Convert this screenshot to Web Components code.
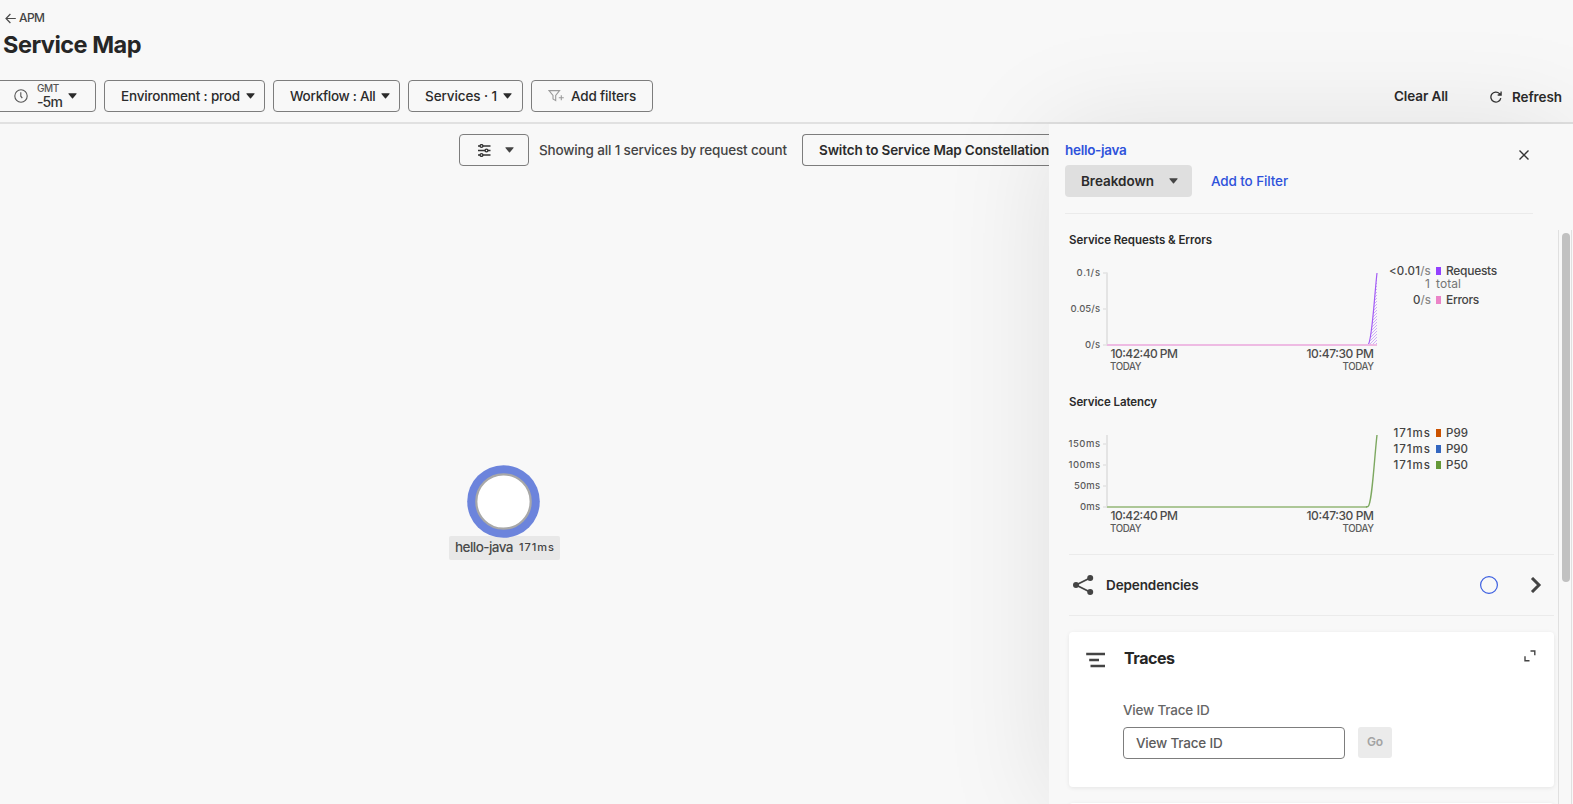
<!DOCTYPE html>
<html lang="en">
<head>
<meta charset="utf-8">
<title>Service Map</title>
<style>
  html, body { margin: 0; height: 100%; overflow: hidden; background: #f8f8f8; }
  body { font-family: Inter, Roboto, "Liberation Sans", sans-serif; font-size: 13.5px; color: #2b2b2b; }
</style>
</head>
<body>
<service-map-page></service-map-page>
<script>
const define = (name, html, extra) => {
  const tpl = document.createElement('template');
  tpl.innerHTML = html;
  customElements.define(name, class extends HTMLElement {
    connectedCallback() {
      if (this.shadowRoot) return;
      this.attachShadow({ mode: 'open' }).append(tpl.content.cloneNode(true));
      if (extra) extra(this, this.shadowRoot);
    }
  });
};

/* Text line that tracks its letters to a set width. Attributes: w, s (size), b (weight), c (colour). */
customElements.define('ui-text', class extends HTMLElement {
  connectedCallback() {
    if (this.shadowRoot) return;
    const r = this.attachShadow({ mode: 'open' });
    r.innerHTML = '<style>:host{display:block;flex:none;white-space:pre;line-height:20px}span{display:inline-block}</style><span><slot></slot></span>';
    const a = n => this.getAttribute(n);
    if (a('s')) this.style.fontSize = a('s') + 'px';
    if (a('b')) this.style.fontWeight = a('b');
    if (a('c')) this.style.color = a('c');
    if (a('w')) {
      const w = r.querySelector('span').getBoundingClientRect().width;
      this.style.letterSpacing = ((+a('w') - w) / this.textContent.length) + 'px';
      this.style.width = a('w') + 'px';
    }
  }
});

define('ui-caret', `
<style>:host{display:block;flex:none;width:9px;height:6px}svg{display:block}</style>
<svg width="9" height="6"><path d="M.8.3h7.4q.7 0 .3.6L5 5.3q-.5.5-1 0L.5.9Q.1.3.8.3z" fill="currentColor"/></svg>`);

define('ui-button', `
<style>
:host{display:flex;flex:none;align-items:center;box-sizing:border-box;height:32px;border:1px solid #7d7d7d;border-radius:4px}
:host([solid]){border:0;background:#dfdfdf}
</style><slot></slot>`);

define('page-header', `
<style>
:host{display:flex;flex-direction:column;flex:none;box-sizing:border-box;height:124px;border-bottom:2px solid #e1e1e1}
.back{display:flex;align-items:center;height:20px;margin:8px 0 0 5px;gap:3px}
.title{margin:2px 0 0 3px;height:30px}
.title ui-text{line-height:30px}
.row{display:flex;align-items:center;margin:20px 0 0 -8px;gap:8px}
.gmt{margin:-2px 6px 0 9px;width:25px}
.gmt ui-text{line-height:13px}
.sp{flex:1}
</style>
<div class="back"><svg width="11" height="11" viewBox="0 0 11 11" fill="none" stroke="#4a4a4a" stroke-width="1.2"><path d="M10.8 5.5H1M5.4 1 1 5.5 5.4 10"/></svg><ui-text s="12" w="25.5" c="#444" b="450">APM</ui-text></div>
<div class="title"><ui-text s="23.5" w="138" b="700" c="#262626">Service Map</ui-text></div>
<div class="row">
  <ui-button style="width:104px;padding-left:21px">
    <svg width="14" height="14" viewBox="0 0 14 14" fill="none" stroke="#555" stroke-width="1.1"><circle cx="7" cy="7" r="6.2"/><path d="M6.8 3.3v3.9l1.5 2"/></svg>
    <div class="gmt"><ui-text s="10" w="22" c="#555" b="450">GMT</ui-text><ui-text s="14" w="25" c="#333" b="450">-5m</ui-text></div>
    <ui-caret></ui-caret>
  </ui-button>
  <ui-button style="width:161px;padding-left:16px;gap:6px"><ui-text w="119" b="500">Environment : prod</ui-text><ui-caret></ui-caret></ui-button>
  <ui-button style="width:127px;padding-left:16px;gap:5px"><ui-text w="85.5" b="500">Workflow : All</ui-text><ui-caret></ui-caret></ui-button>
  <ui-button style="width:115px;padding-left:16px;gap:6px"><ui-text w="72" b="500">Services · 1</ui-text><ui-caret></ui-caret></ui-button>
  <ui-button style="width:122px;padding-left:16px;gap:6px"><svg width="17" height="14" viewBox="0 0 17 14" fill="none" stroke="#9b9b9b" stroke-width="1.1"><path d="M1 1.6h10.6L7.7 6.4v5.2L5 10V6.4zM10.8 8.7h5M13.3 6.2v5"/></svg><ui-text w="65" b="500">Add filters</ui-text></ui-button>
  <div class="sp"></div>
  <ui-text w="54" b="600" style="margin-right:34px">Clear All</ui-text>
  <svg width="12" height="12" viewBox="0 0 12 12" fill="none" stroke="#333" stroke-width="1.3" style="margin-top:2px"><path d="M10.8 7.1A5 5 0 1 1 9.5 2.6L11 4M11.1.6V4H7.700"/></svg>
  <ui-text w="50" b="600" style="margin:2px 11px 0 2px">Refresh</ui-text>
</div>`);

define('service-node', `
<style>
:host{display:flex;flex-direction:column;align-items:center;width:111px}
svg{display:block;position:relative}
.l{display:flex;align-items:center;box-sizing:border-box;width:111px;height:24px;margin-top:-3px;padding:0 0 2px 6px;gap:6px;background:#e8e8e8;border-radius:2px}
</style>
<svg width="75" height="75" viewBox="0 0 75 75"><circle cx="36.500" cy="37.500" r="36.300" fill="#6c84dc"/><circle cx="36.500" cy="37.500" r="27.200" fill="#fff" stroke="#a8a8a8" stroke-width="2.200"/></svg>
<div class="l"><ui-text w="58" c="#4a4a4a" b="450">hello-java</ui-text><ui-text s="11" w="36" b="500" c="#444">171ms</ui-text></div>`);

define('map-canvas', `
<style>
:host{display:block;flex:none;width:1049px;position:relative;overflow:hidden}
.bar{display:flex;align-items:center;padding:10px 0 0 459px}
service-node{position:absolute;left:449px;top:340px}
</style>
<div class="bar">
  <ui-button style="width:70px;padding-left:18px;gap:14px"><svg width="13" height="13" viewBox="0 0 13 13" fill="none" stroke="#333" stroke-width="1.400"><path d="M0 2h2M5 2h7.500M0 6.500h7M10 6.500h2.500M0 11h2M5 11h7.500"/><circle cx="3.500" cy="2" r="1.400"/><circle cx="8.500" cy="6.500" r="1.400"/><circle cx="3.500" cy="11" r="1.400"/></svg><ui-caret style="color:#444"></ui-caret></ui-button>
  <ui-text w="248" c="#444" b="450" style="margin:0 15px 0 10px">Showing all 1 services by request count</ui-text>
  <ui-button style="width:247px;padding-left:16px;border-right:0;border-radius:4px 0 0 4px"><ui-text w="230" b="600">Switch to Service Map Constellation</ui-text></ui-button>
</div>
<service-node></service-node>`);

/* Line chart with a flat run and a closing spike. Kind: requests | latency. */
define('svc-chart', `
<style>
:host{display:block;height:162px}
.t{height:20px;padding-left:4px}
.row{display:flex}
svg{display:block;flex:none}
text{font-family:Inter,Roboto,sans-serif;fill:#5c5c5c}
</style>
<div class="t"><slot name="title"></slot></div>
<div class="row"><svg class="plot" width="318" height="142"></svg><slot></slot></div>`,
(host, root) => {
  const req = host.getAttribute('kind') === 'requests';
  const ticks = req ? [['0.1/s', 23, 23.5], ['0.05/s', 59, 29.5], ['0/s', 95, 15]]
                    : [['150ms', 32, 31.5], ['100ms', 53, 31.5], ['50ms', 74, 26], ['0ms', 95, 20]];
  let s = '';
  for (const [t, y, w] of ticks)
    s += `<path d="M38 ${y}h4" stroke="#e8e8e8" stroke-width="2"/><text x="${35 - w}" y="${y + 3}" font-size="9.500" font-weight="500" textLength="${w}">${t}</text>`;
  s += `<path d="M42 ${req ? 22.5 : 23}V96" stroke="#e4e4e4" stroke-width="2"/>`;
  const curve = 'M303 95C307 92 309 50 312 23';
  if (req) s += `<defs><pattern id="h" width="3" height="3" patternUnits="userSpaceOnUse"><path d="M-1 1 1-1M0 3 3 0M2 4 4 2" stroke="#c49af8" stroke-width=".8"/></pattern></defs>
    <path d="${curve}V95z" fill="url(#h)"/><path d="${curve}" fill="none" stroke="#a35cf5" stroke-width="1.200"/><path d="M42 95h270" stroke="#eebbe3" stroke-width="2"/>`;
  else s += `<path d="M42 95H302" stroke="#adc797" stroke-width="2"/><path d="M301 95L303 94.500C307 92 309 50 312 23" fill="none" stroke="#7da860" stroke-width="1.400"/>`;
  s += `<g font-weight="450"><text x="45.500" y="108" font-size="12" textLength="67.500" style="fill:#4c4c4c">10:42:40 PM</text><text x="241.500" y="108" font-size="12" textLength="67.500" style="fill:#4c4c4c">10:47:30 PM</text>
    <text x="45" y="120" font-size="9.700" textLength="31.500">TODAY</text><text x="277.500" y="120" font-size="9.700" textLength="31.500">TODAY</text></g>`;
  root.querySelector('.plot').innerHTML = s;
});

define('legend-row', `
<style>
:host{display:flex;align-items:center;height:16px}
.v{width:48px;display:flex;justify-content:flex-end}
i{width:5px;height:8px;margin:0 5px;background:var(--c);flex:none}
:host([sub]) i{display:none}
:host([sub]) .v{width:47px;margin-right:6px}
:host([sub]){height:10px;margin-bottom:3px}
</style><div class="v"><slot name="v"></slot></div><i></i><slot></slot>`);

define('dependencies-row', `
<style>
:host{display:flex;align-items:center;box-sizing:border-box;height:62px;margin-left:4px;width:485px;border:solid #ebebeb;border-width:1px 0;padding:0 12px 0 4px}
svg{flex:none}
</style>
<svg width="21" height="20" viewBox="0 0 21 20"><path d="M3 10 17 3M3 10l14 7" stroke="#444" stroke-width="1.900"/><g fill="#444"><circle cx="3" cy="10" r="3"/><circle cx="17.200" cy="3" r="3"/><circle cx="17.200" cy="17" r="3"/></g></svg>
<ui-text w="92.500" b="600" style="margin:0 auto 0 12px">Dependencies</ui-text>
<svg width="18" height="18"><circle cx="9" cy="9" r="8.400" fill="none" stroke="#3c5fe0" stroke-width="1.200"/></svg>
<svg width="12" height="16" viewBox="0 0 12 16" style="margin-left:32px"><path d="M2 1 9 8 2 15" fill="none" stroke="#444" stroke-width="3"/></svg>`);

define('traces-card', `
<style>
:host{display:block;box-sizing:border-box;width:485px;height:155px;margin:16px 0 0 4px;background:#fff;border-radius:4px;box-shadow:0 1px 4px rgba(0,0,0,.08)}
.h{display:flex;align-items:center;height:20px;padding:16px 18px 0 17px}
.f{padding:32px 0 0 54px}
.r{display:flex;align-items:center;margin-top:7px;gap:13px}
.go{height:31px;width:34px;background:#ebebeb;border-radius:3px;display:flex;align-items:center;justify-content:center;margin-top:-1px}
</style>
<div class="h"><svg width="20" height="16" viewBox="0 0 20 16" fill="none" stroke="#444" stroke-width="2.700" style="margin-top:3px"><path d="M.2 2H19M3.200 8H13M4.500 14H19"/></svg>
<ui-text s="16" w="50.500" b="700" c="#262626" style="margin:0 auto 0 18px">Traces</ui-text>
<svg width="12" height="12" viewBox="0 0 12 12" fill="none" stroke="#444" stroke-width="1.400" style="margin-top:-5px"><path d="M6.500 1h4.300v4.300M1 6.200v4.600h4.500"/></svg></div>
<div class="f"><ui-text w="86.500" c="#666" b="450">View Trace ID</ui-text>
<div class="r"><ui-button style="width:222px;padding-left:12px"><ui-text w="86.500" c="#5c5c5c" b="450">View Trace ID</ui-text></ui-button><div class="go"><ui-text s="12" w="16" b="600" c="#a3a3a3" style="margin-top:-1px">Go</ui-text></div></div></div>`);

define('detail-panel', `
<style>
:host{display:block;position:relative;flex:1;box-sizing:border-box;background:#f8f8f8;box-shadow:0 4px 104px rgba(0,0,0,.1);padding-left:16px}
.top{display:flex;justify-content:space-between;width:468px;height:89px;border-bottom:1px solid #ebebeb}
.a{padding-top:16px}
.b{display:flex;align-items:center;gap:19px;margin-top:5px}
.x{margin:26px 4px 0 0}
.body{display:flex;margin-top:16px;height:574px;overflow:hidden}
.c{width:493px;flex:none}
.bar{width:12px;border:solid #e0e0e0;border-width:0 1px;flex:none}
.thumb{width:8px;height:349px;margin:3px 0 0 3px;border-radius:4px;background:#c1c1c1}
.lg{padding-top:13px}
.next{margin:16px 0 0 4px;width:485px;height:40px;background:#fff;border-radius:4px;box-shadow:0 1px 4px rgba(0,0,0,.08)}
</style>
<div class="top">
  <div class="a"><ui-text w="61.500" b="600" c="#2f52db">hello-java</ui-text>
  <div class="b"><ui-button solid style="width:127px;padding-left:16px;gap:15px"><ui-text w="73" b="600">Breakdown</ui-text><ui-caret style="color:#444"></ui-caret></ui-button><ui-text w="77" b="450" c="#2f52db">Add to Filter</ui-text></div></div>
  <svg class="x" width="10" height="10" viewBox="0 0 10 10" stroke="#333" stroke-width="1.400"><path d="M.5.5l9 9M9.500.5l-9 9"/></svg>
</div>
<div class="body"><div class="c">
  <svc-chart kind="requests"><ui-text slot="title" s="11.5" w="143" b="600">Service Requests &amp; Errors</ui-text>
    <div class="lg">
      <legend-row style="--c:#9341ff"><ui-text slot="v" s="11.5" w="42" b="500" c="#444">&lt;0.01<span style="color:#888">/s</span></ui-text><ui-text s="12" w="51" b="500" c="#444">Requests</ui-text></legend-row>
      <legend-row sub><ui-text slot="v" s="12" c="#757575">1</ui-text><ui-text s="12" w="25" c="#757575">total</ui-text></legend-row>
      <legend-row style="--c:#eb84c8"><ui-text slot="v" s="11.5" w="18" b="500" c="#444">0<span style="color:#888">/s</span></ui-text><ui-text s="12" w="33" b="500" c="#444">Errors</ui-text></legend-row>
    </div>
  </svc-chart>
  <svc-chart kind="latency"><ui-text slot="title" s="11.5" w="88" b="600">Service Latency</ui-text>
    <div class="lg">
      <legend-row style="--c:#cb5200"><ui-text slot="v" s="11.5" w="37.500" b="500" c="#444">171ms</ui-text><ui-text s="11.5" w="22" b="500" c="#444">P99</ui-text></legend-row>
      <legend-row style="--c:#3366c0"><ui-text slot="v" s="11.5" w="37.500" b="500" c="#444">171ms</ui-text><ui-text s="11.5" w="22" b="500" c="#444">P90</ui-text></legend-row>
      <legend-row style="--c:#659938"><ui-text slot="v" s="11.5" w="37.500" b="500" c="#444">171ms</ui-text><ui-text s="11.5" w="22" b="500" c="#444">P50</ui-text></legend-row>
    </div>
  </svc-chart>
  <dependencies-row></dependencies-row>
  <traces-card></traces-card>
  <div class="next"></div>
</div><div class="bar"><div class="thumb"></div></div></div>`);

define('service-map-page', `
<style>
:host{display:flex;flex-direction:column;width:1573px;height:804px;overflow:hidden}
.m{display:flex;flex:1;min-height:0}
</style>
<page-header></page-header>
<div class="m"><map-canvas></map-canvas><detail-panel></detail-panel></div>`);
</script>
</body>
</html>
